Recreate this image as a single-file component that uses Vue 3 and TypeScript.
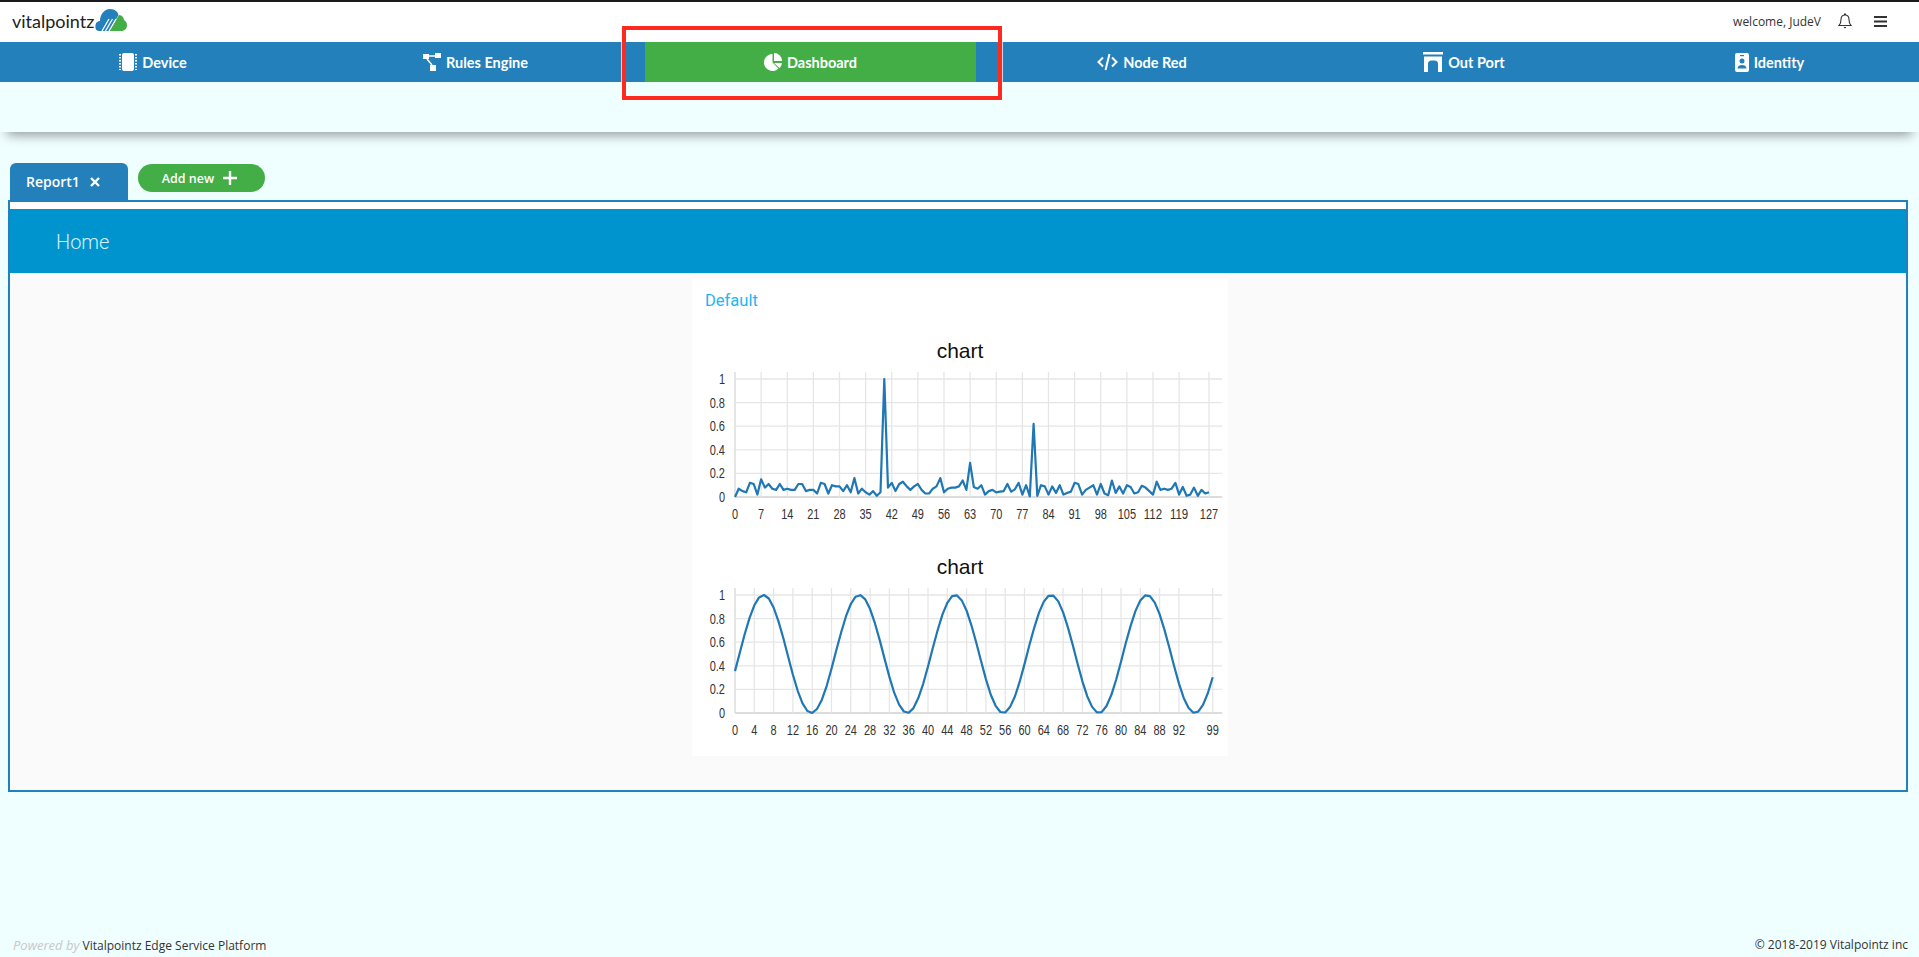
<script setup lang="ts">
import { computed } from 'vue'

const noise: number[] = [
  0, .07, .05, .04, .12, .11, .02, .15, .08, .11, .07, .06, .11, .06, .07, .06, .06, .11, .11, .05,
  .06, .06, .03, .12, .11, .03, .1, .09, .09, .05, .1, .04, .16, .03, .07, .04, .02, .05, .01, .04,
  1, .08, .12, .05, .11, .13, .09, .06, .09, .11, .06, .03, .03, .07, .09, .16, .04, .07, .08, .08,
  .09, .14, .06, .29, .085, .07, .1, .02, .05, .06, .04, .045, .05, .11, .045, .065, .12, .02, .1, .005,
  .62, .01, .1, .09, .02, .09, .035, .1, .02, .035, .045, .12, .11, .02, .06, .08, .1, .02, .11, .03,
  .015, .14, .035, .09, .03, .1, .085, .03, .04, .095, .08, .05, .02, .13, .06, .07, .06, .07, .12, .02,
  .085, .01, .02, .08, .01, .06, .03, .04,
]

const wave: number[] = Array.from({ length: 100 }, (_, i) => 0.5 + 0.5 * Math.cos((2 * Math.PI * (i - 5.9)) / 19.87))

const X0 = 43
const Y0 = 133
const UNIT = 118
const RIGHT = 530
const yTicks = [0, 0.2, 0.4, 0.6, 0.8, 1]

function ticks(step: number, last: number, end: number): number[] {
  const out: number[] = []
  for (let i = 0; i <= last; i += step) out.push(i)
  out.push(end)
  return out
}

function labelLen(s: string): number {
  return s.length * 6.1 - (s.includes('.') ? 3 : 0)
}

function makeChart(data: number[], xTicks: number[], xStep: number) {
  return {
    points: data.map((v, i) => `${(X0 + i * xStep).toFixed(1)},${(Y0 - v * UNIT).toFixed(1)}`).join(' '),
    xTicks: xTicks.map((t) => ({ label: String(t), x: X0 + t * xStep })),
    yTicks: yTicks.map((t) => ({ label: String(t), y: Y0 - t * UNIT })),
  }
}

const charts = computed(() => [
  makeChart(noise, ticks(7, 119, 127), 3.732),
  makeChart(wave, ticks(4, 92, 99), 4.825),
])
</script>

<template>
  <div class="page">
    <header class="topbar">
      <div class="brand">
        <span class="brand-name">vitalpointz</span>
        <svg class="cloud" viewBox="0 0 32 22" width="32" height="22">
          <path fill="#2380bb" d="M4 22C1 22 0 19 .5 16 1 13 3 12 5 12 5 6 9 0 15 0c5 0 8 3 8.500 6L14 22Z" />
          <path fill="#43ae45" d="M24 6c3 0 5 3 5 5 2 1 3 3 3 5 0 4-3 6-6 6H14Z" />
          <path stroke="#fff" stroke-width="1.300" fill="none" d="M7 22l7-12M10.500 22l7-12M14 22l7-12" />
        </svg>
      </div>
      <div class="user">
        <span class="welcome">welcome, JudeV</span>
        <svg class="bell" viewBox="0 0 14 16" width="14" height="16">
          <path fill="none" stroke="#333" stroke-width="1.100" d="M1 12.500h12c-1.500-1.500-2-2.500-2-6C11 3.500 9.500 2 7 2S3 3.500 3 6.500c0 3.500-.5 4.500-2 6Z" />
          <path fill="#333" d="M6 .4h2V2H6zM5.800 14h2.400a1.200 1.200 0 0 1-2.400 0Z" />
        </svg>
        <svg class="menu" viewBox="0 0 13 11" width="13" height="11">
          <path fill="#333" d="M0 0h13v2H0zM0 4.500h13v2H0zM0 9h13v2H0z" />
        </svg>
      </div>
    </header>

    <nav class="nav">
      <a class="nav-item">
        <svg viewBox="0 0 18 18" width="18" height="18">
          <rect x="3" width="12" height="18" rx="2" fill="#fff" />
          <path stroke="#fff" stroke-width="2" stroke-dasharray="1.500 1.500" d="M1 1v16M17 1v16" />
        </svg>
        Device
      </a>
      <a class="nav-item">
        <svg viewBox="0 0 18 18" width="18" height="18">
          <path fill="#fff" d="M0 1h6v5H0zM12 0h6v5h-6zM7 12h6v6H7z" />
          <path stroke="#fff" stroke-width="1.500" fill="none" d="M6 3h6M4 6l5 6" />
        </svg>
        Rules Engine
      </a>
      <a class="nav-item active">
        <svg viewBox="0 0 18 18" width="18" height="18">
          <path fill="#fff" d="M8.500 1A8.500 8.500 0 1 0 14.500 15.500L8.500 9.500ZM10 0a8 8 0 0 1 8 8h-8ZM10 10h8a8 8 0 0 1-2.500 5Z" />
        </svg>
        Dashboard
      </a>
      <a class="nav-item">
        <svg viewBox="0 0 21 18" width="21" height="18">
          <path fill="none" stroke="#fff" stroke-width="2" d="M6 4.500 1.500 9 6 13.500M15 4.500 19.500 9 15 13.500M12.500 1 8.500 17" />
        </svg>
        Node Red
      </a>
      <a class="nav-item">
        <svg viewBox="0 0 20 20" width="20" height="20">
          <path fill="#fff" d="M0 0h20v2.500H0zM1 4.500h18V20h-4v-8a3.500 3.500 0 0 0-3.500-3.500h-3A3.500 3.500 0 0 0 5 12v8H1Z" />
        </svg>
        Out Port
      </a>
      <a class="nav-item">
        <svg viewBox="0 0 14 19" width="14" height="19">
          <rect width="14" height="19" rx="2" fill="#fff" />
          <path fill="#2380bb" d="M5 2h4v1.200H5z" />
          <circle cx="7" cy="8" r="2.500" fill="#2380bb" />
          <path fill="#2380bb" d="M2.500 15.500c0-2.500 2-3.500 4.500-3.500s4.500 1 4.500 3.500Z" />
        </svg>
        Identity
      </a>
    </nav>

    <div class="band"></div>

    <div class="tabs">
      <div class="tab">
        <span>Report1</span>
        <svg viewBox="0 0 10 10" width="10" height="10">
          <path stroke="#fff" stroke-width="2.400" d="M1 1l8 8M9 1l-8 8" />
        </svg>
      </div>
      <button class="add">
        Add new
        <svg viewBox="0 0 14 14" width="14" height="14">
          <path stroke="#fff" stroke-width="2.400" d="M7 0v14M0 7h14" />
        </svg>
      </button>
    </div>

    <section class="panel">
      <div class="home">Home</div>
      <div class="content">
        <div class="card">
          <div class="group">Default</div>
          <div v-for="(chart, c) in charts" :key="c" class="chart">
            <div class="chart-title">chart</div>
            <svg class="plot" viewBox="0 0 536 172" width="536" height="172">
              <line
                v-for="t in chart.yTicks"
                :key="'h' + t.label"
                :x1="X0"
                :x2="RIGHT"
                :y1="t.y"
                :y2="t.y"
                :class="t.label === '0' ? 'axis' : 'grid'"
              />
              <line
                v-for="t in chart.xTicks"
                :key="'v' + t.label"
                :x1="t.x"
                :x2="t.x"
                y1="8"
                :y2="Y0"
                :class="t.label === '0' ? 'axis-y' : 'grid'"
              />
              <polyline class="series" :points="chart.points" />
              <text
                v-for="t in chart.yTicks"
                :key="'yl' + t.label"
                class="tick"
                x="33"
                :y="t.y + 5"
                text-anchor="end"
                :textLength="labelLen(t.label)"
                lengthAdjust="spacingAndGlyphs"
              >{{ t.label }}</text>
              <text
                v-for="t in chart.xTicks"
                :key="'xl' + t.label"
                class="tick"
                :x="t.x"
                y="155"
                text-anchor="middle"
                :textLength="labelLen(t.label)"
                lengthAdjust="spacingAndGlyphs"
              >{{ t.label }}</text>
            </svg>
          </div>
        </div>
      </div>
    </section>

    <footer class="footer">
      <span><em>Powered by</em> Vitalpointz Edge Service Platform</span>
      <span>© 2018-2019 Vitalpointz inc</span>
    </footer>

    <!-- annotation drawn over the screenshot -->
    <div class="marker"></div>
  </div>
</template>

<style>
html,
body {
  margin: 0;
  background: #effefe;
}
</style>

<style scoped>
.page {
  position: relative;
  display: flex;
  flex-direction: column;
  height: 957px;
  overflow: hidden;
  background: #effefe;
  font-family: "Open Sans", sans-serif;
  color: #333;
}

.topbar {
  display: flex;
  align-items: center;
  justify-content: space-between;
  box-sizing: border-box;
  height: 42px;
  padding: 0 32px 2px 12px;
  background: #fff;
  border-top: 2px solid #1a1a1a;
}

.brand {
  display: flex;
  align-items: center;
  gap: 1px;
}

.brand-name {
  font-family: Lato, sans-serif;
  font-size: 18px;
  color: #222;
}

.cloud {
  margin-top: -3px;
}

.user {
  display: flex;
  align-items: center;
}

.welcome {
  font-size: 12px;
  margin-right: 17px;
}

.menu {
  margin-left: 22px;
}

.nav {
  display: grid;
  grid-template-columns: 306px 339px 331px 332px 312px 299px;
  height: 40px;
  background: #2380bb;
}

.nav-item {
  display: flex;
  align-items: center;
  justify-content: center;
  gap: 5px;
  font-family: Lato, sans-serif;
  font-size: 14.500px;
  font-weight: 700;
  color: #fff;
}

.nav-item.active {
  background: #43ae45;
}

.band {
  height: 50px;
  flex: none;
  background: #effefe;
  box-shadow: 0 10px 12px -7px rgba(0, 0, 0, 0.4);
}

.tabs {
  display: flex;
  align-items: flex-start;
  gap: 10px;
  height: 37px;
  margin-top: 31px;
  padding-left: 10px;
}

.tab {
  display: flex;
  align-items: center;
  gap: 10px;
  box-sizing: border-box;
  width: 118px;
  height: 37px;
  padding: 0 0 0 16px;
  background: #2380bb;
  border-radius: 6px 6px 0 0;
  color: #fff;
  font-size: 14px;
  font-weight: 600;
}

.add {
  display: flex;
  align-items: center;
  justify-content: center;
  gap: 9px;
  box-sizing: border-box;
  width: 127px;
  height: 28px;
  margin-top: 1px;
  padding: 0 4px 0 0;
  border: 0;
  border-radius: 14px;
  background: #43ae45;
  color: #fff;
  font-family: "Open Sans", sans-serif;
  font-size: 12.500px;
  font-weight: 600;
}

.panel {
  box-sizing: border-box;
  height: 592px;
  margin: 0 11px 0 8px;
  padding-top: 7px;
  background: #fff;
  border: 2px solid #2380bb;
}

.home {
  height: 64px;
  padding-left: 46px;
  background: #0094cf;
  color: #d6f0fa;
  font-family: Roboto, sans-serif;
  font-size: 20px;
  font-weight: 300;
  line-height: 66px;
}

.content {
  display: flex;
  justify-content: center;
  box-sizing: border-box;
  height: 517px;
  padding: 6px 0 0 4px;
  background: #fafafa;
}

.card {
  box-sizing: border-box;
  width: 536px;
  height: 477px;
  padding-top: 11px;
  background: #fff;
}

.group {
  height: 22px;
  margin-bottom: 26px;
  padding-left: 13px;
  font-family: Roboto, sans-serif;
  font-size: 16.500px;
  line-height: 22px;
  color: #1fb5f5;
}

.chart {
  margin-bottom: 18px;
}

.chart-title {
  height: 26px;
  font-family: "Liberation Sans", sans-serif;
  font-size: 21px;
  line-height: 26px;
  text-align: center;
  color: #111;
}

.plot {
  display: block;
}

.grid {
  stroke: #e6e6e6;
  stroke-width: 1.300;
}

.axis {
  stroke: #dcdcdc;
  stroke-width: 2;
}

.axis-y {
  stroke: #dcdcdc;
  stroke-width: 1.500;
}

.series {
  fill: none;
  stroke: #1f77b4;
  stroke-width: 2.200;
  stroke-linejoin: round;
}

.tick {
  font-family: "Liberation Sans", sans-serif;
  font-size: 14px;
  fill: #333;
}

.footer {
  display: flex;
  justify-content: space-between;
  margin-top: auto;
  padding: 0 11px 2px 13px;
  font-size: 12px;
  line-height: 18px;
  color: #333;
}

.footer em {
  color: #c8c8c8;
  font-size: 13px;
}

.marker {
  position: absolute;
  left: 622px;
  top: 26px;
  width: 372px;
  height: 66px;
  border: 4px solid #ff2a1f;
  outline: 1px solid rgba(255, 255, 255, 0.7);
}
</style>
